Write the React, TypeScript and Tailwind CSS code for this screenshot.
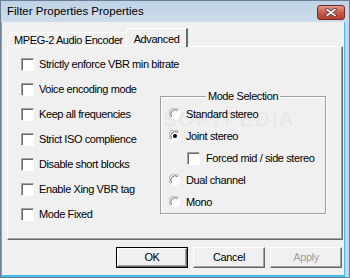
import { ReactNode } from 'react'

const font = {
  fontFamily: '"Liberation Sans", Arial, sans-serif',
}

const checkboxes = [
  'Strictly enforce VBR min bitrate',
  'Voice encoding mode',
  'Keep all frequencies',
  'Strict ISO complience',
  'Disable short blocks',
  'Enable Xing VBR tag',
  'Mode Fixed',
]

function CheckBox() {
  return (
    <span className="block size-[13px] shrink-0 border border-t-[#a0a0a0] border-l-[#a0a0a0] border-r-[#ffffff] border-b-[#ffffff] bg-white shadow-[inset_1px_1px_0_#696969]" />
  )
}

function Radio({ checked }: { checked?: boolean }) {
  return (
    <svg width="12" height="12" viewBox="0 0 12 12" className="shrink-0">
      <circle cx="6" cy="6" r="5.5" fill="#ffffff" />
      <path d="M1.6 9.6 A5.5 5.5 0 0 1 9.6 1.6" fill="none" stroke="#a0a0a0" />
      <path d="M2.6 8.6 A4.3 4.3 0 0 1 8.6 2.6" fill="none" stroke="#696969" />
      {checked && <circle cx="6" cy="6" r="2" fill="#000000" />}
    </svg>
  )
}

function Row({ children, h = 'h-[25px]' }: { children: ReactNode; h?: string }) {
  return (
    <div className={`flex items-center gap-[5px] whitespace-nowrap ${h}`}>
      {children}
    </div>
  )
}

function Button({
  children,
  primary,
  disabled,
}: {
  children: ReactNode
  primary?: boolean
  disabled?: boolean
}) {
  return (
    <div
      className={`flex h-[21px] w-[72px] items-center justify-center border ${
        primary ? 'border-black' : 'border-transparent border-r-[#696969] border-b-[#696969] border-t-white border-l-white'
      }`}
    >
      <div
        className={`flex h-full w-full items-center justify-center bg-[#f0f0f0] ${
          primary
            ? 'border border-t-white border-l-white border-r-[#696969] border-b-[#696969] shadow-[inset_-1px_-1px_0_#a0a0a0]'
            : 'shadow-[inset_-1px_-1px_0_#a0a0a0]'
        } ${disabled ? 'text-[#a0a0a0]' : 'text-black'}`}
      >
        {children}
      </div>
    </div>
  )
}

export default function App() {
  return (
    <div
      className="flex h-[278px] w-[350px] flex-col border border-[#6b7f95] bg-[#c6d6e8] text-[11px] tracking-[-0.4px] text-black"
      style={font}
    >
      <div className="flex h-[21px] items-center justify-between bg-gradient-to-b from-[#c0d3e8] to-[#cddbea] pl-[6px] pr-[4px]">
        <span className="text-[11.5px] leading-none tracking-normal">Filter Properties Properties</span>
        <span className="mt-[2px] flex h-[15px] w-[28px] items-center justify-center rounded-[3px] border border-[#6d2a2a] bg-gradient-to-b from-[#e09a8c] via-[#c75a4a] to-[#b84030]">
          <svg width="12" height="9" viewBox="0 0 12 9">
            <path d="M2 1.5 L10 7.5 M10 1.5 L2 7.5" stroke="#5a2020" strokeWidth="3.4" strokeLinecap="round" />
            <path d="M2 1.5 L10 7.5 M10 1.5 L2 7.5" stroke="#ffffff" strokeWidth="1.8" strokeLinecap="round" />
          </svg>
        </span>
      </div>

      <div className="flex flex-1 flex-col pr-[4px]">
        <div className="flex flex-1 flex-col border-b-2 border-l border-r border-[#3fbfe8] bg-[#f0f0f0] pl-[5px] pr-[1px] pt-[6px]">
          {/* tabs */}
          <div className="flex h-[18px] items-end pl-[2px] whitespace-nowrap">
            <div className="flex h-[14px] w-[118px] items-center justify-center border-l border-t border-white shadow-[inset_-1px_0_0_#a0a0a0]">
              <span className="mt-[2px]">MPEG-2 Audio Encoder</span>
            </div>
            <div className="relative z-10 -mb-px -ml-px flex h-[19px] w-[62px] items-start justify-center border-l border-t border-r-2 border-white border-r-[#696969] bg-[#f0f0f0] pt-[2px]">
              <span>Advanced</span>
            </div>
          </div>

          {/* panel */}
          <div className="relative flex h-[194px] border border-l-white border-t-white border-r-[#696969] border-b-[#696969] shadow-[inset_-1px_-1px_0_#a0a0a0] pl-[13px]">
            <div className="flex w-[139px] shrink-0 flex-col pt-[5px]">
              {checkboxes.map((label) => (
                <Row key={label}>
                  <CheckBox />
                  <span>{label}</span>
                </Row>
              ))}
            </div>

            <div className="relative mt-[49px] h-[118px] w-[166px] border border-[#a0a0a0] shadow-[inset_1px_1px_0_#fff,1px_1px_0_#fff] pl-[8px] pt-[6px]">
              <span className="absolute -top-[8px] left-0 right-0 flex justify-center">
                <span className="bg-[#f0f0f0] px-[2px] leading-[14px]">Mode Selection</span>
              </span>
              <Row h="h-[22px]">
                <Radio />
                <span>Standard stereo</span>
              </Row>
              <Row h="h-[22px]">
                <Radio checked />
                <span>Joint stereo</span>
              </Row>
              <div className="pl-[18px]">
                <Row h="h-[22px]">
                  <CheckBox />
                  <span className="ml-[1px]">Forced mid / side stereo</span>
                </Row>
              </div>
              <Row h="h-[22px]">
                <Radio />
                <span>Dual channel</span>
              </Row>
              <Row h="h-[22px]">
                <Radio />
                <span>Mono</span>
              </Row>
            </div>

            <div className="pointer-events-none absolute left-[155px] top-[62px] flex flex-col text-black/[0.05]">
              <span className="text-[20px] font-bold leading-none tracking-[2px]">SOFTPEDIA</span>
              <span className="ml-[8px] text-[9px] leading-[14px]">www.softpedia.com</span>
            </div>
          </div>

          {/* buttons */}
          <div className="mt-[7px] flex justify-end gap-[5px] pr-px">
            <Button primary>OK</Button>
            <Button>Cancel</Button>
            <Button disabled>Apply</Button>
          </div>
        </div>
      </div>
    </div>
  )
}
